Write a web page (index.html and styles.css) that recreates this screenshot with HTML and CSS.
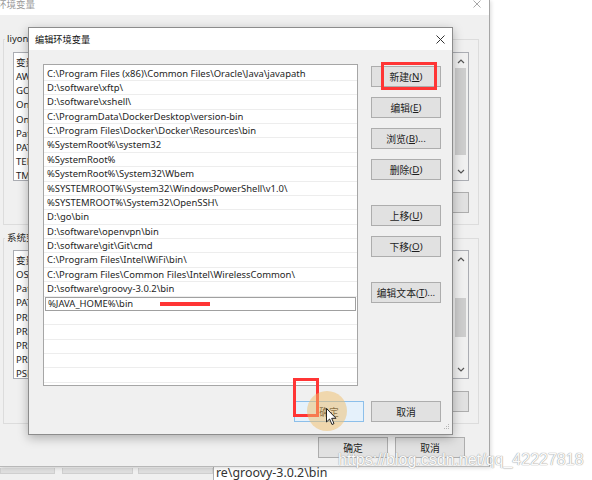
FILE: index.html
```html
<!DOCTYPE html>
<html>
<head>
<meta charset="utf-8">
<title>编辑环境变量</title>
<link rel="stylesheet" href="styles.css">
</head>
<body>
<div class="under">
  <div class="under-left"><span class="ub ub1"></span><span class="ub ub2"></span><span class="ub ub3"></span></div>
  <div class="under-right">re\groovy-3.0.2\bin</div>
</div>

<div class="envwin">
  <div class="env-title">
    <span class="env-title-text">环境变量</span>
    <svg class="env-close" width="8" height="8" viewBox="0 0 8 8"><path d="M0.5 0.5L7.5 7.5M7.5 0.5L0.5 7.5" stroke="#a8a8a8" stroke-width="1" fill="none"/></svg>
  </div>
  <div class="env-body">
    <fieldset class="group g1">
      <legend>liyong 的用户变量(U)</legend>
      <div class="listbox">
        <div class="lb-rows">
          <div class="lb-head">变量</div>
          <div class="lb-row">AWS_HOME</div>
          <div class="lb-row">GOPATH</div>
          <div class="lb-row">OneDrive</div>
          <div class="lb-row">OneDriveConsumer</div>
          <div class="lb-row">Path</div>
          <div class="lb-row">PATH</div>
          <div class="lb-row">TEMP</div>
          <div class="lb-row">TMP</div>
        </div>
        <div class="vscroll">
          <svg class="sb-arrow" width="16" height="15" viewBox="0 0 16 15"><path d="M5 10L8 7L11 10" stroke="#555" stroke-width="1.2" fill="none"/></svg>
          <div class="sb-track"><div class="sb-thumb t1"></div></div>
          <svg class="sb-arrow" width="16" height="15" viewBox="0 0 16 15"><path d="M5 5L8 8L11 5" stroke="#555" stroke-width="1.2" fill="none"/></svg>
        </div>
      </div>
      <div class="grp-btns"><span class="btn">新建(N)...</span><span class="btn">编辑(E)...</span><span class="btn">删除(D)</span></div>
    </fieldset>

    <fieldset class="group g2">
      <legend>系统变量(S)</legend>
      <div class="listbox">
        <div class="lb-rows">
          <div class="lb-head">变量</div>
          <div class="lb-row">OS</div>
          <div class="lb-row">Path</div>
          <div class="lb-row">PATHEXT</div>
          <div class="lb-row">PROCESSOR_ARCHITECTURE</div>
          <div class="lb-row">PROCESSOR_IDENTIFIER</div>
          <div class="lb-row">PROCESSOR_LEVEL</div>
          <div class="lb-row">PROCESSOR_REVISION</div>
          <div class="lb-row">PSModulePath</div>
        </div>
        <div class="vscroll">
          <svg class="sb-arrow" width="16" height="15" viewBox="0 0 16 15"><path d="M5 10L8 7L11 10" stroke="#555" stroke-width="1.2" fill="none"/></svg>
          <div class="sb-track"><div class="sb-thumb t2"></div></div>
          <svg class="sb-arrow" width="16" height="15" viewBox="0 0 16 15"><path d="M5 5L8 8L11 5" stroke="#555" stroke-width="1.2" fill="none"/></svg>
        </div>
      </div>
      <div class="grp-btns g2b"><span class="btn">新建(W)...</span><span class="btn">编辑(I)...</span><span class="btn">删除(L)</span></div>
    </fieldset>

    <div class="env-foot"><span class="btn">确定</span><span class="btn">取消</span></div>
  </div>
</div>

<div class="dialog">
  <div class="dlg-title">
    <span>编辑环境变量</span>
    <svg width="9" height="9" viewBox="0 0 9 9"><path d="M0.5 0.5L8.5 8.5M8.5 0.5L0.5 8.5" stroke="#333" stroke-width="1" fill="none"/></svg>
  </div>
  <div class="dlg-body">
    <div class="dlg-main">
      <div class="pathlist">
        <div class="path">C:\Program Files (x86)\Common Files\Oracle\Java\javapath</div>
        <div class="path">D:\software\xftp\</div>
        <div class="path">D:\software\xshell\</div>
        <div class="path">C:\ProgramData\DockerDesktop\version-bin</div>
        <div class="path">C:\Program Files\Docker\Docker\Resources\bin</div>
        <div class="path">%SystemRoot%\system32</div>
        <div class="path">%SystemRoot%</div>
        <div class="path">%SystemRoot%\System32\Wbem</div>
        <div class="path">%SYSTEMROOT%\System32\WindowsPowerShell\v1.0\</div>
        <div class="path">%SYSTEMROOT%\System32\OpenSSH\</div>
        <div class="path">D:\go\bin</div>
        <div class="path">D:\software\openvpn\bin</div>
        <div class="path">D:\software\git\Git\cmd</div>
        <div class="path">C:\Program Files\Intel\WiFi\bin\</div>
        <div class="path">C:\Program Files\Common Files\Intel\WirelessCommon\</div>
        <div class="path">D:\software\groovy-3.0.2\bin</div>
        <div class="path editing">%JAVA_HOME%\bin</div>
        <div class="path"></div>
        <div class="path"></div>
        <div class="path"></div>
        <div class="path"></div>
        <div class="path"></div>
        <div class="path"></div>
      </div>
      <div class="sidebtns">
        <span class="btn">新建(<u>N</u>)</span>
        <span class="btn">编辑(<u>E</u>)</span>
        <span class="btn">浏览(<u>B</u>)...</span>
        <span class="btn">删除(<u>D</u>)</span>
        <span class="btn sep">上移(<u>U</u>)</span>
        <span class="btn">下移(<u>O</u>)</span>
        <span class="btn sep">编辑文本(<u>T</u>)...</span>
      </div>
    </div>
    <div class="dlg-foot">
      <span class="btn default">确定</span>
      <span class="btn">取消</span>
    </div>
  </div>
  <svg class="grip" width="8" height="8" viewBox="0 0 8 8"><g fill="#b5b5b5"><rect x="6" y="0" width="1" height="1"/><rect x="4" y="2" width="1" height="1"/><rect x="6" y="2" width="1" height="1"/><rect x="2" y="4" width="1" height="1"/><rect x="4" y="4" width="1" height="1"/><rect x="6" y="4" width="1" height="1"/></g></svg>
</div>

<div class="mark mark-new"></div>
<div class="mark mark-ok"></div>
<div class="underline-mark"></div>
<div class="click-ring"></div>
<svg class="cursor" width="12" height="18" viewBox="0 0 12 18"><path d="M0.5 0.5L0.5 14L3.6 11L6 16.5L8 15.6L5.7 10.3L10 10.3Z" fill="#fff" stroke="#222" stroke-width="1" stroke-linejoin="round"/></svg>
<div class="watermark">https://blog.csdn.net/qq_42227818</div>
</body>
</html>
```

FILE: styles.css
```css
* { box-sizing: border-box; }
html, body { margin: 0; padding: 0; }
body {
  width: 592px;
  height: 480px;
  overflow: hidden;
  position: relative;
  background: #fff;
  font-family: "Noto Sans", "Noto Sans CJK SC", sans-serif;
  font-size: 10px;
  color: #1e1e1e;
}

/* window behind, peeking below */
.under {
  position: absolute;
  left: 0;
  top: 466px;
  width: 490px;
  height: 14px;
  display: flex;
}
.under-left {
  width: 213px;
  background: #f0f0f0;
  display: flex;
  padding-top: 2px;
}
.ub { height: 6px; background: #dedede; border: 1px solid #cfcfcf; border-top: none; }
.ub1 { width: 55px; }
.ub2 { width: 71px; margin-left: 7px; }
.ub3 { width: 75px; margin-left: 5px; }
.under-right {
  flex: 1;
  background: #fff;
  border-left: 1px solid #b0b0b0;
  font-size: 12.4px;
  line-height: 13px;
  padding-left: 2px;
  color: #333;
  white-space: nowrap;
  overflow: hidden;
}

/* background window */
.envwin {
  position: absolute;
  left: 0;
  top: 0;
  width: 490px;
  height: 467px;
  background: #f0f0f0;
  border-right: 1px solid #a6a6a6;
  border-bottom: 1px solid #b8b8b8;
  box-shadow: 1px 1px 4px rgba(0, 0, 0, .15);
  display: flex;
  flex-direction: column;
}
.env-title {
  height: 15px;
  background: #fff;
  display: flex;
  justify-content: space-between;
  align-items: flex-start;
}
.env-title-text {
  color: #9a9a9a;
  font-size: 9.5px;
  line-height: 10px;
  margin-left: -3px;
}
.env-close { margin: 0 8px 0 0; }
.env-body {
  padding: 18px 10px 0 3px;
  display: flex;
  flex-direction: column;
}
.group {
  margin: 0;
  min-width: 0;
  border: 1px solid #dcdcdc;
  padding: 0 9px 11px 9px;
}
.group legend {
  padding: 0 2px;
  margin-left: -8px;
  font-size: 9.5px;
  line-height: 12px;
  color: #1e1e1e;
}
.g2 { margin-top: 7px; }
.listbox {
  display: flex;
  height: 129px;
  margin-top: 7px;
  border: 1px solid #abadb3;
  background: #fff;
}
.g2 .listbox { margin-top: 6px; }
.lb-rows {
  flex: 1;
  padding: 2px 0 0 2px;
  overflow: hidden;
  white-space: nowrap;
  font-size: 9.6px;
}
.lb-head { height: 15px; line-height: 15px; }
.lb-row { height: 14.2px; line-height: 14.2px; }
.vscroll {
  width: 16px;
  border-left: 1px solid #e2e2e2;
  background: #f0f0f0;
  display: flex;
  flex-direction: column;
}
.sb-arrow { display: block; flex: none; }
.sb-track { flex: 1; padding: 0 2px; }
.sb-thumb { background: #cdcdcd; }
.t1 { height: 87px; }
.t2 { height: 39px; margin-top: 32px; }
.grp-btns {
  display: flex;
  justify-content: flex-end;
  gap: 7px;
  margin-top: 11px;
}
.g2b { margin-top: 12px; }
.env-foot {
  display: flex;
  justify-content: flex-end;
  gap: 7px;
  margin-top: 13px;
  margin-right: 14px;
}

.btn {
  width: 70px;
  height: 21px;
  flex: none;
  border: 1px solid #adadad;
  background: #e1e1e1;
  display: flex;
  align-items: center;
  justify-content: center;
  font-size: 9.8px;
  color: #1e1e1e;
  white-space: nowrap;
}
.btn u { text-underline-offset: 1px; }
.btn.default { background: #e5f1fb; border-color: #8cbfea; }

/* edit dialog */
.dialog {
  position: absolute;
  left: 28px;
  top: 27px;
  width: 425px;
  height: 408px;
  border: 1px solid #8c8c8c;
  background: #f0f0f0;
  box-shadow: 0 3px 10px rgba(0, 0, 0, .28);
  display: flex;
  flex-direction: column;
}
.dlg-title {
  height: 22px;
  flex: none;
  background: #fff;
  display: flex;
  align-items: center;
  justify-content: space-between;
  padding: 0 7px 0 6px;
  font-size: 9.2px;
  color: #111;
}
.dlg-body {
  flex: 1;
  padding: 14px 11px 12px 14px;
  display: flex;
  flex-direction: column;
}
.dlg-main {
  display: flex;
  gap: 13px;
  height: 322px;
}
.pathlist {
  width: 315px;
  border: 1px solid #a6a6a6;
  background: #fff;
  padding-top: 1.5px;
  overflow: hidden;
  font-size: 9.45px;
}
.path {
  height: 14.375px;
  line-height: 13.4px;
  padding-left: 3px;
  border-bottom: 1px solid #ededed;
  white-space: nowrap;
  overflow: hidden;
}
.path.editing {
  border: 1px solid #a0a0a0;
  margin: 0 1px;
  padding-left: 2px;
  line-height: 12.4px;
}
.sidebtns {
  width: 70px;
  display: flex;
  flex-direction: column;
  gap: 10px;
  padding-top: 2px;
}
.sidebtns .sep { margin-top: 15px; }
.dlg-foot {
  margin-top: auto;
  display: flex;
  justify-content: flex-end;
  gap: 7px;
}
.grip { position: absolute; right: 2px; bottom: 2px; }

/* annotations */
.mark {
  position: absolute;
  border: 3px solid #ff3535;
}
.mark-new { left: 381px; top: 62px; width: 56px; height: 28px; }
.mark-ok { left: 293px; top: 378px; width: 26px; height: 39px; }
.underline-mark {
  position: absolute;
  left: 160px;
  top: 302px;
  width: 50px;
  height: 4px;
  background: #ff3535;
}
.click-ring {
  position: absolute;
  left: 307px;
  top: 391px;
  width: 40px;
  height: 40px;
  border-radius: 50%;
  background: rgba(240, 190, 105, .5);
}
.cursor { position: absolute; left: 326px; top: 408px; }
.watermark {
  position: absolute;
  left: 338px;
  top: 450px;
  font-family: "Liberation Sans", sans-serif;
  font-size: 16px;
  line-height: 20px;
  color: #fafafa;
  text-shadow: 0 0 1px #9c9c9c, 0 0 1px #9c9c9c;
  white-space: nowrap;
}
```
